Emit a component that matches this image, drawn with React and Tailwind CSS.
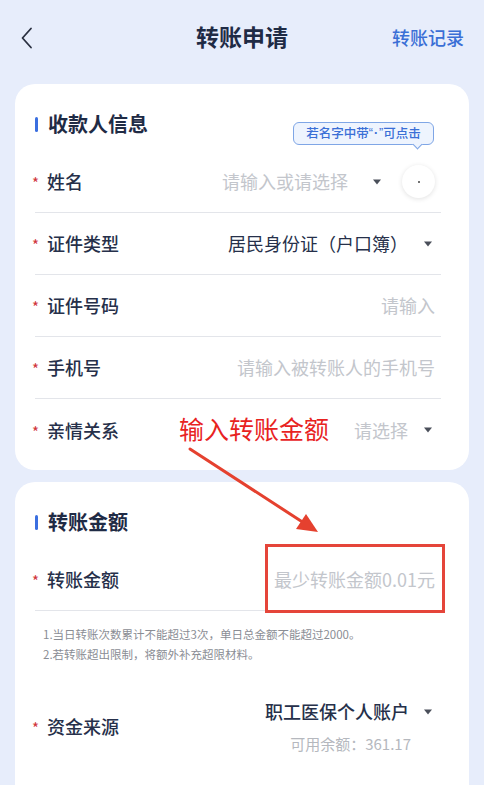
import React from "react";

const F = { fontFamily: '"Noto Sans CJK SC", "Noto Sans", sans-serif' };

function Caret() {
  return (
    <svg width="10" height="6" viewBox="0 0 10 6" className="shrink-0">
      <path d="M1 0.5 L9 0.5 L5 5.5 Z" fill="#4a4f5a" />
    </svg>
  );
}

function Label({ children }) {
  return (
    <div className="flex items-center shrink-0">
      <span className="w-[15px] -ml-[3px] text-[15px] text-[#d0343a] leading-none pt-[2px]">*</span>
      <span className="text-[18px] text-[#26304a] font-medium">{children}</span>
    </div>
  );
}

function Row({ label, children, last }) {
  return (
    <div className={"h-[62px] flex items-center justify-between pr-[8px] " + (last ? "" : "border-b border-[#e3e5ea]")}>
      <Label>{label}</Label>
      <div className="flex items-center gap-[15px]">{children}</div>
    </div>
  );
}

function SectionTitle({ children }) {
  return (
    <div className="h-[28px] flex items-center">
      <div className="w-[3px] h-[15px] rounded-full bg-[#3b6fe0] mr-[10px]" />
      <span className="text-[20px] font-bold text-[#1f2b45]">{children}</span>
    </div>
  );
}

export default function App() {
  return (
    <div style={F} className="relative w-full h-[785px] overflow-hidden bg-[#e7edfb]">
      {/* header */}
      <div className="h-[74px] relative flex items-center justify-center">
        <svg className="absolute left-[20px] top-[27px]" width="14" height="22" viewBox="0 0 14 22">
          <path d="M11 1.5 L2.5 11 L11 20.5" fill="none" stroke="#2a3040" strokeWidth="1.8" strokeLinecap="round" strokeLinejoin="round" />
        </svg>
        <span className="text-[23px] font-bold text-[#1f2b45] -mt-[2px]">转账申请</span>
        <span className="absolute right-[20px] top-[24px] text-[18px] text-[#3a6fd6] font-medium">转账记录</span>
      </div>

      {/* card 1 */}
      <div className="relative mt-[10px] mx-[15px] rounded-[20px] bg-white pl-[20px] pr-[28px] pt-[26px] pb-[9px]">
        <SectionTitle>收款人信息</SectionTitle>
        <div className="absolute left-[278px] top-[38px]">
          <div className="relative h-[23px] w-[141px] justify-center flex items-center rounded-[6px] border border-[#7fa6e6] bg-[#eef4fe] text-[12.5px] text-[#3a6fd6] font-medium whitespace-nowrap">
            若名字中带<span style={{ fontFamily: '"Liberation Sans", sans-serif' }}>“<span className="mx-[1px] font-bold">·</span>”</span>可点击
            <div className="absolute right-[12px] -bottom-[4px] w-[7px] h-[7px] rotate-45 bg-[#eef4fe] border-r border-b border-[#7fa6e6]" />
          </div>
        </div>
        <div className="mt-[13px]">
          <Row label="姓名">
            <span className="text-[18px] text-[#c3c6cc]">请输入或请选择</span>
            <div className="flex items-center gap-[20px] ml-[9px] -mr-[2px]">
              <Caret />
              <div className="w-[33px] h-[33px] rounded-full bg-white shadow-[0_1px_5px_rgba(0,0,0,0.12)] flex items-center justify-center">
                <div className="w-[2px] h-[2px] rounded-full bg-[#444]" />
              </div>
            </div>
          </Row>
          <Row label="证件类型">
            <span className="text-[18px] text-[#26304a]">居民身份证（户口簿）</span>
            <Caret />
          </Row>
          <Row label="证件号码">
            <span className="text-[18px] text-[#c3c6cc] -mr-[2px]">请输入</span>
          </Row>
          <Row label="手机号">
            <span className="text-[18px] text-[#c3c6cc] -mr-[2px]">请输入被转账人的手机号</span>
          </Row>
          <Row label="亲情关系" last>
            <span className="text-[18px] text-[#c3c6cc]">请选择</span>
            <Caret />
          </Row>
        </div>
      </div>

      {/* card 2 */}
      <div className="relative mt-[12px] mx-[15px] rounded-[20px] bg-white pl-[20px] pr-[28px] pt-[26px] pb-[60px]">
        <SectionTitle>转账金额</SectionTitle>
        <div className="mt-[12px] h-[63px] flex items-center justify-between pr-[6px] border-b border-[#e3e5ea]">
          <Label>转账金额</Label>
          <span className="text-[18px] text-[#c3c6cc]">最少转账金额0.01元</span>
        </div>
        <div className="pt-[13px] pl-[8px] text-[11.5px] leading-[20px] text-[#8a8d94]">
          <div>1.当日转账次数累计不能超过3次，单日总金额不能超过2000。</div>
          <div>2.若转账超出限制，将额外补充超限材料。</div>
        </div>
        <div className="mt-[34px] flex items-center justify-between pr-[8px]">
          <Label>资金来源</Label>
          <div className="flex flex-col items-end">
            <div className="flex items-center gap-[14px]">
              <span className="text-[18px] text-[#26304a] font-medium">职工医保个人账户</span>
              <Caret />
            </div>
            <span className="mt-[8px] mr-[22px] text-[15px] text-[#b5b8be]">可用余额：361.17</span>
          </div>
        </div>
      </div>

      {/* annotations */}
      <span className="absolute left-[179px] top-[411px] text-[25px] leading-[34px] text-[#e8231f]">输入转账金额</span>
      <svg className="absolute left-0 top-0 pointer-events-none" width="484" height="785">
        <line x1="190" y1="449" x2="304" y2="523" stroke="#e5412f" strokeWidth="3" strokeLinecap="round" />
        <path d="M318 532 L296 529 L306 514 Z" fill="#e5412f" />
      </svg>
      <div className="absolute left-[265px] top-[544px] w-[180px] h-[69px] border-[3px] border-[#e5453a]" />
    </div>
  );
}
